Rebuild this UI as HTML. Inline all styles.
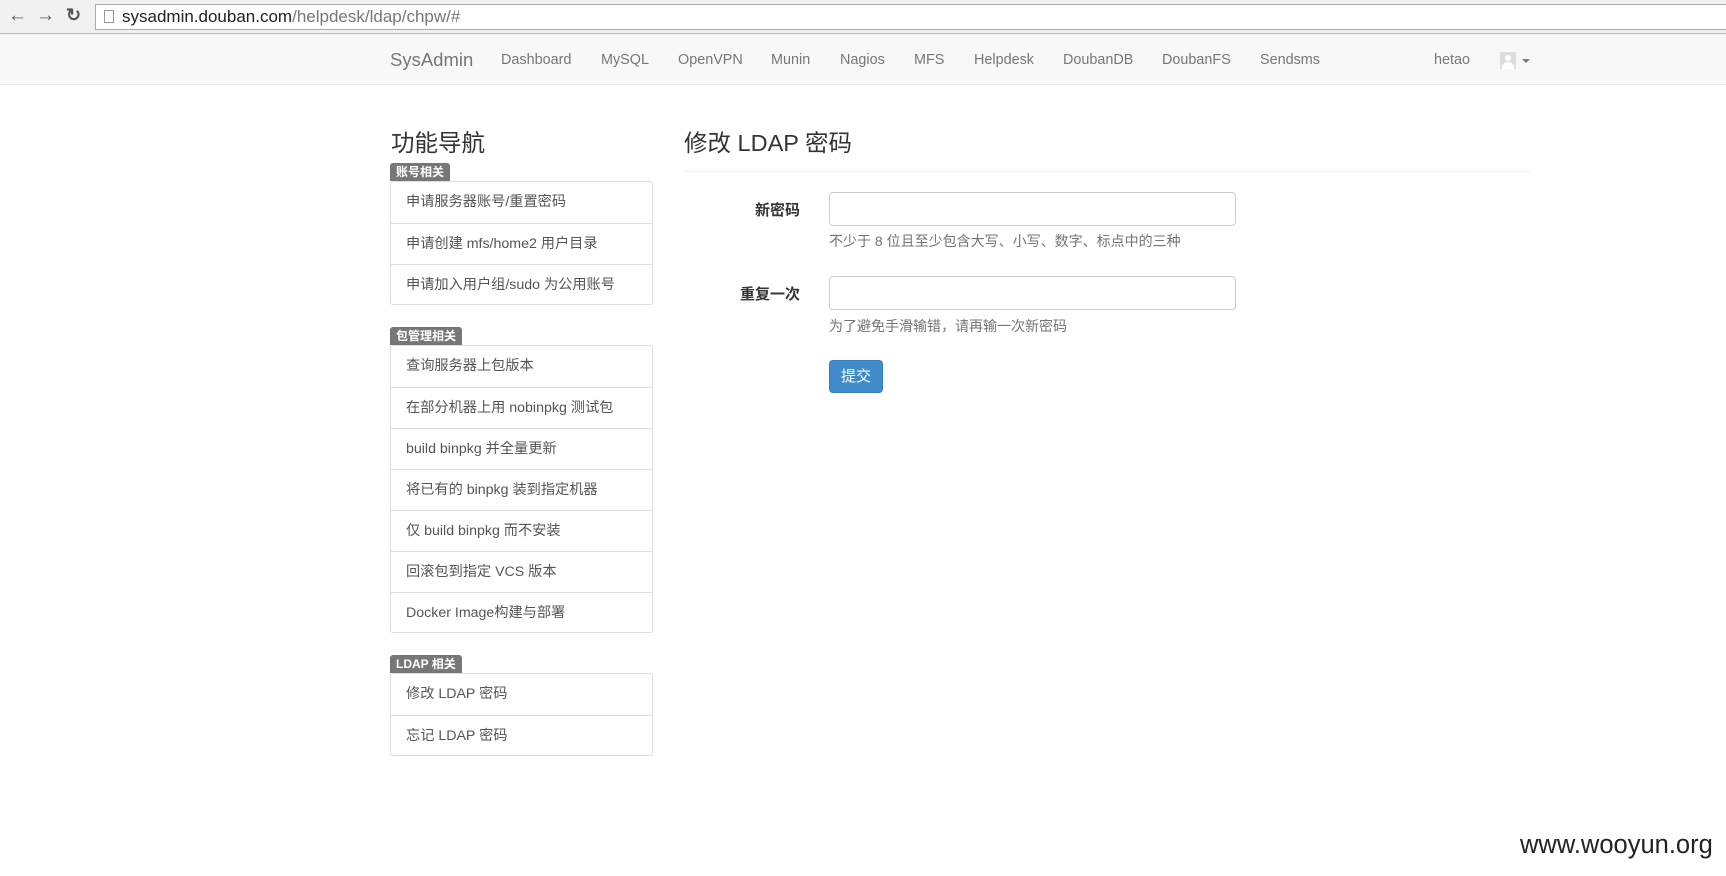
<!DOCTYPE html>
<html><head><meta charset="utf-8"><style>
*{box-sizing:border-box;margin:0;padding:0}
body{width:1726px;height:876px;position:relative;background:#fff;font-family:"Liberation Sans","Noto Sans CJK SC",sans-serif;color:#333;overflow:hidden;font-size:15px}
.a{position:absolute;white-space:nowrap}
.chrome{position:absolute;left:0;top:0;width:1726px;height:34px;background:#f1f1f1;border-bottom:1px solid #bbb}
.url{position:absolute;left:95px;top:4px;width:1640px;height:26px;background:#fff;border:1px solid #aaa;font-size:17px;line-height:24px;padding-left:26px;color:#222}
.nav{position:absolute;left:0;top:34px;width:1726px;height:51px;background:#f8f8f8;border-bottom:1px solid #e7e7e7}
.nav .a{top:18px;color:#777;font-size:14.4px}
.lbl{position:absolute;left:390px;height:18px;background:#777;color:#fff;font-size:12px;font-weight:bold;line-height:18px;padding:0 6px;border-radius:3px 3px 0 0}
.lg{position:absolute;left:390px;width:263px;border:1px solid #ddd;border-radius:3px}
.lg div{height:41px;line-height:40px;padding-left:15px;border-top:1px solid #ddd;font-size:14.2px;color:#555}
.lg div:first-child{border-top:none}
.inp{position:absolute;left:829px;width:407px;height:34px;border:1px solid #ccc;border-radius:4px}
.help{position:absolute;left:829px;color:#737373;font-size:14px}
.flab{position:absolute;font-weight:bold;font-size:15px;color:#333}
</style></head><body>
<div class="chrome">
<span class="a" style="left:8px;top:5px;font-size:19px;color:#555">&#8592;</span>
<span class="a" style="left:36px;top:5px;font-size:19px;color:#555">&#8594;</span>
<span class="a" style="left:66px;top:5px;font-size:18px;color:#555;font-weight:bold">&#8635;</span>
<div class="url"><span style="position:absolute;left:8px;top:5px;width:10px;height:13px;border:1px solid #999"></span>sysadmin.douban.com<span style="color:#777">/helpdesk/ldap/chpw/#</span></div>
</div>
<div class="nav">
<span class="a" style="left:390px;top:15px;font-size:18.5px;color:#777">SysAdmin</span>
<span class="a" style="left:501px">Dashboard</span>
<span class="a" style="left:601px">MySQL</span>
<span class="a" style="left:678px">OpenVPN</span>
<span class="a" style="left:771px">Munin</span>
<span class="a" style="left:840px">Nagios</span>
<span class="a" style="left:914px">MFS</span>
<span class="a" style="left:974px">Helpdesk</span>
<span class="a" style="left:1063px">DoubanDB</span>
<span class="a" style="left:1162px">DoubanFS</span>
<span class="a" style="left:1260px">Sendsms</span>
<span class="a" style="left:1434px">hetao</span>
<span style="position:absolute;left:1500px;top:18px;width:16px;height:17px;background:#ddd"><span style="position:absolute;left:5px;top:3px;width:6px;height:6px;border-radius:50%;background:#fff"></span><span style="position:absolute;left:2px;top:10px;width:12px;height:7px;border-radius:6px 6px 0 0;background:#fff"></span></span>
<span style="position:absolute;left:1522px;top:25px;border-left:4px solid transparent;border-right:4px solid transparent;border-top:4px solid #777"></span>
</div>
<span class="a" style="left:391px;top:124px;font-size:23.5px;color:#333">功能导航</span>
<span class="a" style="left:684px;top:124px;font-size:23.5px;color:#333">修改 LDAP 密码</span>
<div style="position:absolute;left:684px;top:171px;width:846px;border-top:1px solid #eee"></div>
<div class="lbl" style="top:163px">账号相关</div>
<div class="lg" style="top:181px;height:124px"><div>申请服务器账号/重置密码</div><div>申请创建 mfs/home2 用户目录</div><div>申请加入用户组/sudo 为公用账号</div></div>
<div class="lbl" style="top:327px">包管理相关</div>
<div class="lg" style="top:345px;height:288px"><div>查询服务器上包版本</div><div>在部分机器上用 nobinpkg 测试包</div><div>build binpkg 并全量更新</div><div>将已有的 binpkg 装到指定机器</div><div>仅 build binpkg 而不安装</div><div>回滚包到指定 VCS 版本</div><div>Docker Image构建与部署</div></div>
<div class="lbl" style="top:655px">LDAP 相关</div>
<div class="lg" style="top:673px;height:83px"><div>修改 LDAP 密码</div><div>忘记 LDAP 密码</div></div>
<span class="flab" style="left:755px;top:199px">新密码</span>
<div class="inp" style="top:192px"></div>
<span class="help" style="left:829px;top:231px">不少于 8 位且至少包含大写、小写、数字、标点中的三种</span>
<span class="flab" style="left:740px;top:283px">重复一次</span>
<div class="inp" style="top:276px"></div>
<span class="help" style="top:316px">为了避免手滑输错，请再输一次新密码</span>
<div style="position:absolute;left:829px;top:360px;width:54px;height:33px;background:#428bca;border:1px solid #357ebd;border-radius:4px;color:#fff;font-size:15px;text-align:center;line-height:31px">提交</div>
<span class="a" style="left:1520px;top:831px;font-size:25.5px;color:#222">www.wooyun.org</span>
</body></html>
